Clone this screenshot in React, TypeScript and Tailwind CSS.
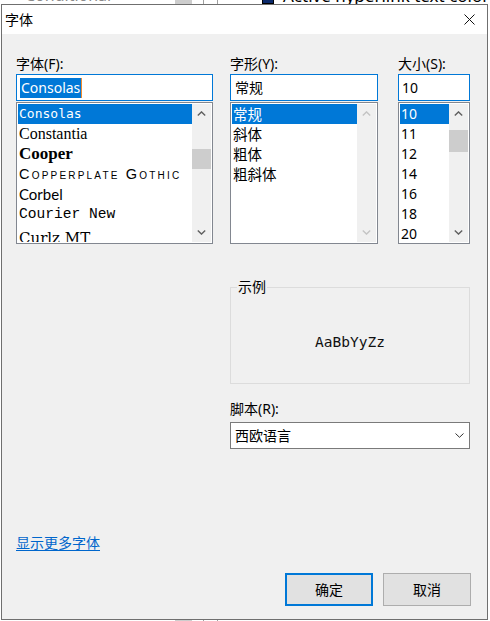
import type { ReactNode } from "react";

const ui = "font-['Noto_Sans','Noto_Sans_CJK_SC',sans-serif]";

function Chevron({ up, color }: { up?: boolean; color: string }) {
  return (
    <svg width="9" height="5" viewBox="0 0 9 5" fill="none">
      <path
        d={up ? "M0.8 4.4L4.5 0.9L8.2 4.4" : "M0.8 0.6L4.5 4.1L8.2 0.6"}
        stroke={color}
        strokeWidth="1.4"
      />
    </svg>
  );
}

function ScrollBar({ thumbTop, thumbH, disabled }: { thumbTop?: number; thumbH?: number; disabled?: boolean }) {
  const c = disabled ? "#c4c4c4" : "#606060";
  return (
    <div className="flex w-[19px] shrink-0 flex-col bg-[#f0f0f0]">
      <div className="flex h-[19px] items-center justify-center">
        <Chevron up color={c} />
      </div>
      <div className="flex-1">
        {thumbH ? <div className="bg-[#cdcdcd]" style={{ marginTop: thumbTop, height: thumbH }} /> : null}
      </div>
      <div className="flex h-[19px] items-center justify-center">
        <Chevron color={c} />
      </div>
    </div>
  );
}

function ListBox({ children, scroll }: { children: ReactNode; scroll: ReactNode }) {
  return (
    <div className="mt-px flex h-[142px] border border-[#828790] bg-white p-px">
      <div className="min-w-0 flex-1 overflow-hidden">{children}</div>
      {scroll}
    </div>
  );
}

function Item({ children, selected, className }: { children: ReactNode; selected?: boolean; className?: string }) {
  return (
    <div
      className={`h-[20px] overflow-visible whitespace-nowrap pl-px leading-[20px] ${
        selected ? "bg-[#0078d7] text-white" : "text-black"
      } ${className ?? ""}`}
    >
      {children}
    </div>
  );
}

function Field({ children }: { children: ReactNode }) {
  return (
    <div className="flex h-[27px] items-center border border-[#0078d7] bg-white px-[3px] text-[14px]">
      {children}
    </div>
  );
}

function Label({ children }: { children: ReactNode }) {
  return <div className="h-[21px] text-[14px] leading-[21px] text-black">{children}</div>;
}

export default function App() {
  return (
    <div className={`relative h-[621px] w-[490px] overflow-hidden bg-white ${ui}`}>
      {/* window behind the dialog */}
      <div className="absolute left-[175px] top-0 h-full w-[17px] bg-[#cdcdcd]" />
      <div className="absolute left-[203px] top-0 h-full w-px bg-[#a0a0a0]" />
      <div className="absolute left-[217px] top-0 h-full w-px bg-[#a0a0a0]" />
      <div className="absolute left-[25px] top-[-13px] text-[16px] leading-[16px] text-[#8a8a8a]">Conditional</div>
      <div className="absolute left-[262px] top-[-8px] h-[12px] w-[12px] border border-black bg-[#0b2a6b]" />
      <div className="absolute left-[283px] top-[-13px] text-[17px] leading-[17px] text-black">
        Active hyperlink text color
      </div>

      {/* dialog window */}
      <div className="absolute left-px top-[4px] flex h-[616px] w-[487px] flex-col border border-[#6f6f6f] bg-[#f0f0f0]">
        <div className="flex h-[29px] shrink-0 items-center justify-between bg-white pl-[3px]">
          <span className="text-[14px] text-black">字体</span>
          <div className="flex h-full w-[36px] items-center justify-center">
            <svg width="11" height="11" viewBox="0 0 11 11">
              <path d="M0.5 0.5L10.5 10.5M10.5 0.5L0.5 10.5" stroke="#111" strokeWidth="1" />
            </svg>
          </div>
        </div>

        <div className="flex flex-1 flex-col pl-[14px] pt-[19px]">
          <div className="flex">
            {/* font family */}
            <div className="w-[197px]">
              <Label>字体(F):</Label>
              <Field>
                <span className="flex items-center">
                  <span className="h-[20px] bg-[#0078d7] px-px leading-[20px] text-white">Consolas</span>
                  <span className="h-[20px] w-px bg-[#f08c30]" />
                </span>
              </Field>
              <ListBox scroll={<ScrollBar thumbTop={26} thumbH={20} />}>
                <Item selected className="font-['DejaVu_Sans_Mono',monospace] text-[13px]">
                  Consolas
                </Item>
                <Item className="font-['Liberation_Serif',serif] text-[16px]">Constantia</Item>
                <Item className="font-['Liberation_Serif',serif] text-[17px] font-black">Cooper</Item>
                <Item className="font-['Liberation_Sans',sans-serif] text-[14.5px] tracking-[2.2px] [font-variant-caps:small-caps]">
                  Copperplate Gothic
                </Item>
                <Item className="font-['Lato',sans-serif] text-[15px]">Corbel</Item>
                <Item className="font-['Liberation_Mono',monospace] text-[14.6px]">Courier New</Item>
                <Item className="pt-[4px] font-['DejaVu_Serif',serif] text-[15px]">Curlz MT</Item>
              </ListBox>
            </div>

            {/* style */}
            <div className="ml-[17px] w-[148px]">
              <Label>字形(Y):</Label>
              <Field>
                <span className="pl-px">常规</span>
              </Field>
              <ListBox scroll={<ScrollBar disabled />}>
                <div className="text-[14.5px]">
                  <Item selected>常规</Item>
                  <Item>斜体</Item>
                  <Item>粗体</Item>
                  <Item>粗斜体</Item>
                </div>
              </ListBox>
            </div>

            {/* size */}
            <div className="ml-[20px] w-[72px]">
              <Label>大小(S):</Label>
              <Field>
                <span>10</span>
              </Field>
              <ListBox scroll={<ScrollBar thumbTop={7} thumbH={22} />}>
                <div className="text-[14px]">
                  <Item selected>10</Item>
                  <Item>11</Item>
                  <Item>12</Item>
                  <Item>14</Item>
                  <Item>16</Item>
                  <Item>18</Item>
                  <Item>20</Item>
                </div>
              </ListBox>
            </div>
          </div>

          {/* sample + script */}
          <div className="ml-[214px] w-[240px]">
            <div className="relative mt-[43px] flex h-[97px] items-center justify-center border border-[#dcdcdc] pt-[14px]">
              <span className="absolute left-[6px] top-[-11px] bg-[#f0f0f0] px-px text-[14px] leading-[20px] text-black">
                示例
              </span>
              <span className="font-['DejaVu_Sans_Mono',monospace] text-[14.5px] text-[#111]">AaBbYyZz</span>
            </div>
            <div className="mt-[14px]">
              <Label>脚本(R):</Label>
            </div>
            <div className="mt-[3px] flex h-[27px] items-center justify-between border border-[#7a7a7a] bg-white pl-[4px] pr-[5px] text-[14px] text-black">
              <span>西欧语言</span>
              <svg width="9" height="5" viewBox="0 0 9 5" fill="none">
                <path d="M0.5 0.5L4.5 4.3L8.5 0.5" stroke="#333" strokeWidth="1" />
              </svg>
            </div>
          </div>

          <div className="mt-[84px] h-[20px] text-[14px] leading-[20px]">
            <span className="text-[#0066cc] underline underline-offset-2">显示更多字体</span>
          </div>

          <div className="mt-[20px] flex justify-end gap-[10px] pr-[16px]">
            <button className="h-[33px] w-[88px] border-2 border-[#0078d7] bg-[#e1e1e1] text-[14px] text-black">
              确定
            </button>
            <button className="h-[33px] w-[88px] border border-[#adadad] bg-[#e1e1e1] text-[14px] text-black">
              取消
            </button>
          </div>
        </div>
      </div>
    </div>
  );
}
